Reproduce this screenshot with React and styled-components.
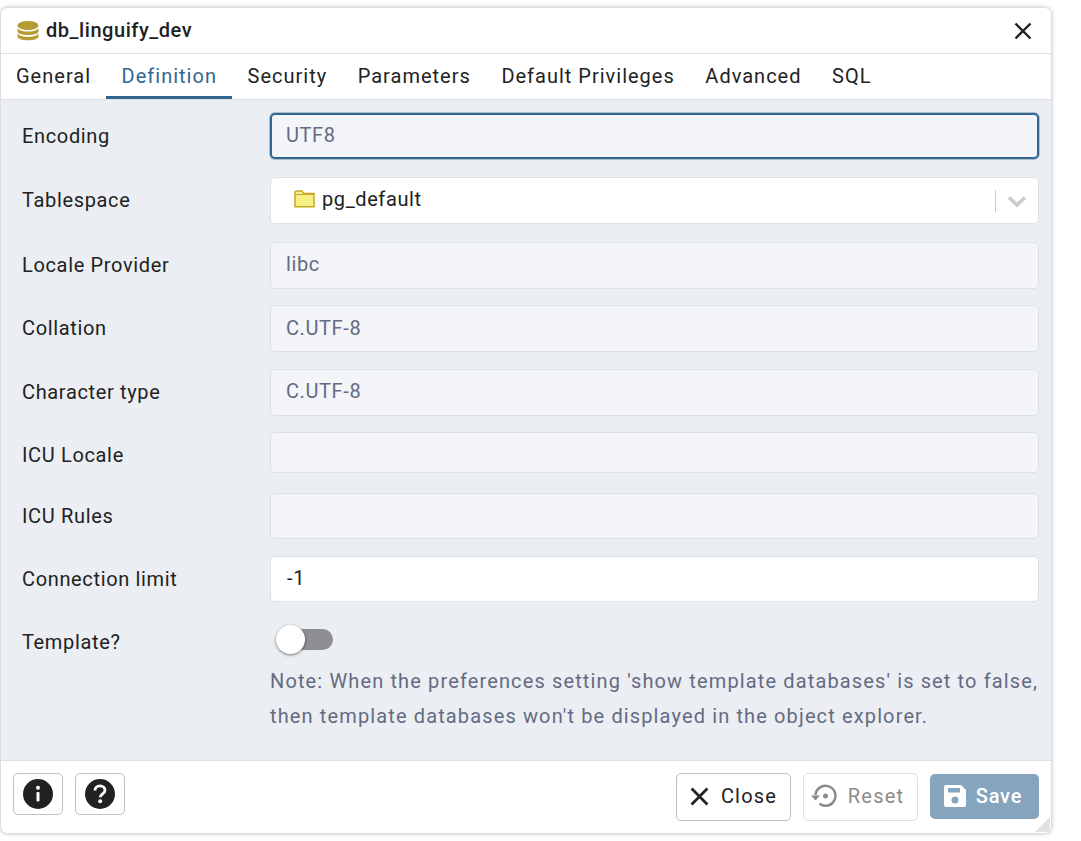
import React from "react";
import styled, { createGlobalStyle } from "styled-components";

const Global = createGlobalStyle`
  html, body { margin: 0; padding: 0; background: #fff; }
  body { font-family: Roboto, "Liberation Sans", sans-serif; }
`;
const Page = styled.div`
  width: 1081px; height: 841px; padding: 8px 0 0 1px; box-sizing: border-box; overflow: hidden;
`;
const Dialog = styled.div`
  position: relative; width: 1050px; height: 825px; display: flex; flex-direction: column;
  background: #fff; border-radius: 6px; overflow: hidden;
  box-shadow: 0 0 5px rgba(0,0,0,.32);
`;
const Header = styled.div`
  height: 45px; flex: none; display: flex; align-items: center; padding: 0 19px 0 16px;
  border-bottom: 1px solid #dde0e6; color: #222;
`;
const Title = styled.div`
  flex: 1; margin-left: 7px; padding-bottom: 2px; font-size: 20px; font-weight: 500; letter-spacing: .55px;
`;
const Tabs = styled.div`
  height: 45px; flex: none; display: flex; border-bottom: 1px solid #dde0e6; box-sizing: content-box;
`;
const Tab = styled.div`
  box-sizing: border-box; height: 45px; padding: 10px 15.3px 0; font-size: 20px; letter-spacing: 1px;
  line-height: 24px; white-space: nowrap;
  color: ${p => (p.$active ? "#326690" : "#222")};
  border-bottom: 3px solid ${p => (p.$active ? "#326690" : "transparent")};
  &:first-child { padding-left: 15px; }
`;
const Form = styled.div`
  flex: 1; background: #ebeef3; padding: 13px 12px 0 21px; display: flex; flex-direction: column;
`;
const Row = styled.div`
  display: grid; grid-template-columns: 248px 1fr; align-items: start;
  height: ${p => p.$h}px; margin-bottom: ${p => p.$mb}px;
`;
const Label = styled.div`
  font-size: 20px; letter-spacing: .65px; color: #222; line-height: 47px; white-space: nowrap;
`;
const ToggleLabel = styled(Label)`
  line-height: 45px;
`;
const Field = styled.div`
  box-sizing: border-box; height: ${p => p.$h}px; display: flex; align-items: center;
  padding: 0 15px ${p => p.$pb ?? 2}px ${p => (p.$on ? 16 : 15)}px;
  border-radius: 5px; font-size: 20px; letter-spacing: .6px;
  background: ${p => (p.$on ? "#fff" : "#f3f5f9")};
  color: ${p => (p.$on ? "#222" : "#646b82")};
  border: 1px solid #dde0e6;
`;
const Focused = styled(Field)`
  border: 2px solid #326690; padding-left: 14px;
  box-shadow: 0 0 0 1px rgba(50, 102, 144, .35);
`;
const SelectField = styled(Field)`
  padding: 0 11px 0 15px;
`;
const SelectValue = styled.div`
  flex: 1; display: flex; align-items: center; gap: 7px; padding: 0 0 4px 8px;
`;
const SelectSep = styled.div`
  width: 1px; height: 22px; background: #cccccc; margin-right: 11px;
`;
const ToggleRow = styled.div`
  display: grid; grid-template-columns: 248px 1fr; height: 44px;
`;
const Track = styled.div`
  position: relative; width: 56px; height: 21px; margin: 9px 0 0 7px; background: #8f8f93; border-radius: 11px;
`;
const Knob = styled.div`
  position: absolute; left: -1px; top: -4px; width: 29px; height: 29px; border-radius: 50%; background: #fff;
  box-shadow: 0 1px 3px rgba(0,0,0,.5);
`;
const Note = styled.div`
  margin-left: 248px; font-size: 20px; line-height: 35px; letter-spacing: 1.13px; color: #646b82; white-space: nowrap;
`;
const Footer = styled.div`
  height: 73px; flex: none; box-sizing: border-box; border-top: 1px solid #dde0e6; display: flex; align-items: flex-start;
  padding: 12px 12px 0;
`;
const IconButton = styled.button`
  width: 50px; height: 42px; padding: 0; display: flex; align-items: center; justify-content: center; background: #fff;
  border: 1px solid #bac1cd; border-radius: 5px; margin-right: 12px; color: #222;
`;
const Spacer = styled.div` flex: 1; `;
const TextButton = styled.button`
  box-sizing: border-box; width: 115px; height: 48px; margin-left: 12px; display: flex; align-items: center; justify-content: center; gap: 12px;
  font: 400 20px Roboto, sans-serif; letter-spacing: 1.2px; background: #fff; border-radius: 5px; padding: 0 0 2px;
  color: #222;
  border: 1px solid #bac1cd;
`;
const ResetButton = styled(TextButton)`
  gap: 10px; padding-right: 6px; color: #8a8a8a; border-color: #dde0e6;
`;
const SaveButton = styled(TextButton)`
  width: 109px; height: 45px; margin-top: 1px; gap: 9px; padding: 0 4px 1px 0; background: #85a5bf; color: #fff; border: none; font-weight: 500;
  letter-spacing: .85px;
`;
const Grip = styled.svg`
  position: absolute; right: 1px; bottom: 1px;
`;

const Db = () => (
  <svg width="22" height="20" viewBox="0 0 22 20" fill="#b59b30">
    <ellipse cx="11" cy="4.5" rx="10.5" ry="4.5" />
    <path d="M.5 7.2C2.2 9.6 6.4 10.6 11 10.6S19.8 9.6 21.5 7.2V10.2C21.5 12.6 16.8 14 11 14S.5 12.6.5 10.2Z" />
    <path d="M.5 12.6C2.2 15 6.4 16 11 16S19.8 15 21.5 12.6V15.2C21.5 17.8 16.8 19.3 11 19.3S.5 17.8.5 15.2Z" />
  </svg>
);
const X = ({ s = 18, w = 2.4 }) => (
  <svg width={s} height={s} viewBox="0 0 18 18" fill="none" stroke="currentColor" strokeWidth={w}>
    <path d="M1.5 1.5L16.5 16.5M16.5 1.5L1.5 16.5" />
  </svg>
);
const Folder = () => (
  <svg width="21" height="18" viewBox="0 0 21 18">
    <path d="M1 16.8V2.2Q1 1 2.2 1H8L10 3.5H20V16.8Z" fill="#f6f184" stroke="#c9a822" strokeWidth="1.5" />
    <path d="M1 4.5H20" stroke="#c9a822" strokeWidth="1" />
  </svg>
);
const Chevron = () => (
  <svg width="20" height="14" viewBox="0 0 20 14" fill="none" stroke="#cccccc" strokeWidth="3.6">
    <path d="M2 3.5L10 11L18 3.5" />
  </svg>
);
const Info = () => (
  <svg width="30" height="30" viewBox="0 0 30 30">
    <circle cx="15" cy="15" r="15" fill="#222" />
    <rect x="13.5" y="13" width="3" height="9.5" rx="1" fill="#fff" />
    <circle cx="15" cy="8.8" r="2" fill="#fff" />
  </svg>
);
const Help = () => (
  <svg width="30" height="30" viewBox="0 0 30 30">
    <circle cx="15" cy="15" r="15" fill="#222" />
    <path d="M10 11.5C10 8.5 12.3 6.8 15 6.8C17.8 6.8 20 8.6 20 11.2C20 14.8 15.3 14.8 15.3 18.2" fill="none" stroke="#fff" strokeWidth="2.8" />
    <circle cx="15.2" cy="22.3" r="2" fill="#fff" />
  </svg>
);
const Reset = () => (
  <svg width="27" height="24" viewBox="0 0 27 24" fill="none" stroke="#8a8a8a">
    <path d="M4.5 11A10 10 0 1 1 8.5 19.8" strokeWidth="2.5" />
    <path d="M0 11.5L9 11.5L4.5 16.5Z" fill="#8a8a8a" stroke="none" />
    <circle cx="14.5" cy="12" r="2.5" fill="#8a8a8a" stroke="none" />
  </svg>
);
const Floppy = () => (
  <svg width="24" height="24" viewBox="0 0 24 24">
    <path d="M3 1H18L23 6V21Q23 23 21 23H3Q1 23 1 21V3Q1 1 3 1Z" fill="#fff" />
    <rect x="5" y="4" width="12" height="4.5" rx=".5" fill="#85a5bf" />
    <circle cx="12" cy="16" r="3.5" fill="#85a5bf" />
  </svg>
);

const tabs = ["General", "Definition", "Security", "Parameters", "Default Privileges", "Advanced", "SQL"];

export default function App() {
  return (
    <Page>
      <Global />
      <Dialog>
        <Header>
          <Db />
          <Title>db_linguify_dev</Title>
          <X />
        </Header>
        <Tabs>
          {tabs.map(t => <Tab key={t} $active={t === "Definition"}>{t}</Tab>)}
        </Tabs>
        <Form>
          <Row $h={46} $mb={18}><Label>Encoding</Label><Focused $h={46}>UTF8</Focused></Row>
          <Row $h={47} $mb={18}>
            <Label>Tablespace</Label>
            <SelectField $on $h={47}>
              <SelectValue><Folder />pg_default</SelectValue>
              <SelectSep />
              <Chevron />
            </SelectField>
          </Row>
          <Row $h={47} $mb={16}><Label>Locale Provider</Label><Field $h={47} $pb={4}>libc</Field></Row>
          <Row $h={47} $mb={17}><Label>Collation</Label><Field $h={47}>C.UTF-8</Field></Row>
          <Row $h={47} $mb={16}><Label>Character type</Label><Field $h={47} $pb={4}>C.UTF-8</Field></Row>
          <Row $h={41} $mb={20}><Label>ICU Locale</Label><Field $h={41} /></Row>
          <Row $h={46} $mb={17}><Label>ICU Rules</Label><Field $h={46} /></Row>
          <Row $h={46} $mb={18}><Label>Connection limit</Label><Field $on $h={46}>-1</Field></Row>
          <ToggleRow>
            <ToggleLabel>Template?</ToggleLabel>
            <Track><Knob /></Track>
          </ToggleRow>
          <Note>
            Note: When the preferences setting 'show template databases' is set to false,<br />
            then template databases won't be displayed in the object explorer.
          </Note>
        </Form>
        <Footer>
          <IconButton><Info /></IconButton>
          <IconButton><Help /></IconButton>
          <Spacer />
          <TextButton><X s={19} w={2.6} />Close</TextButton>
          <ResetButton><Reset />Reset</ResetButton>
          <SaveButton><Floppy />Save</SaveButton>
        </Footer>
        <Grip width="15" height="15" viewBox="0 0 15 15"><path d="M15 0V15H0Z" fill="#e2e2e2" /></Grip>
      </Dialog>
    </Page>
  );
}
